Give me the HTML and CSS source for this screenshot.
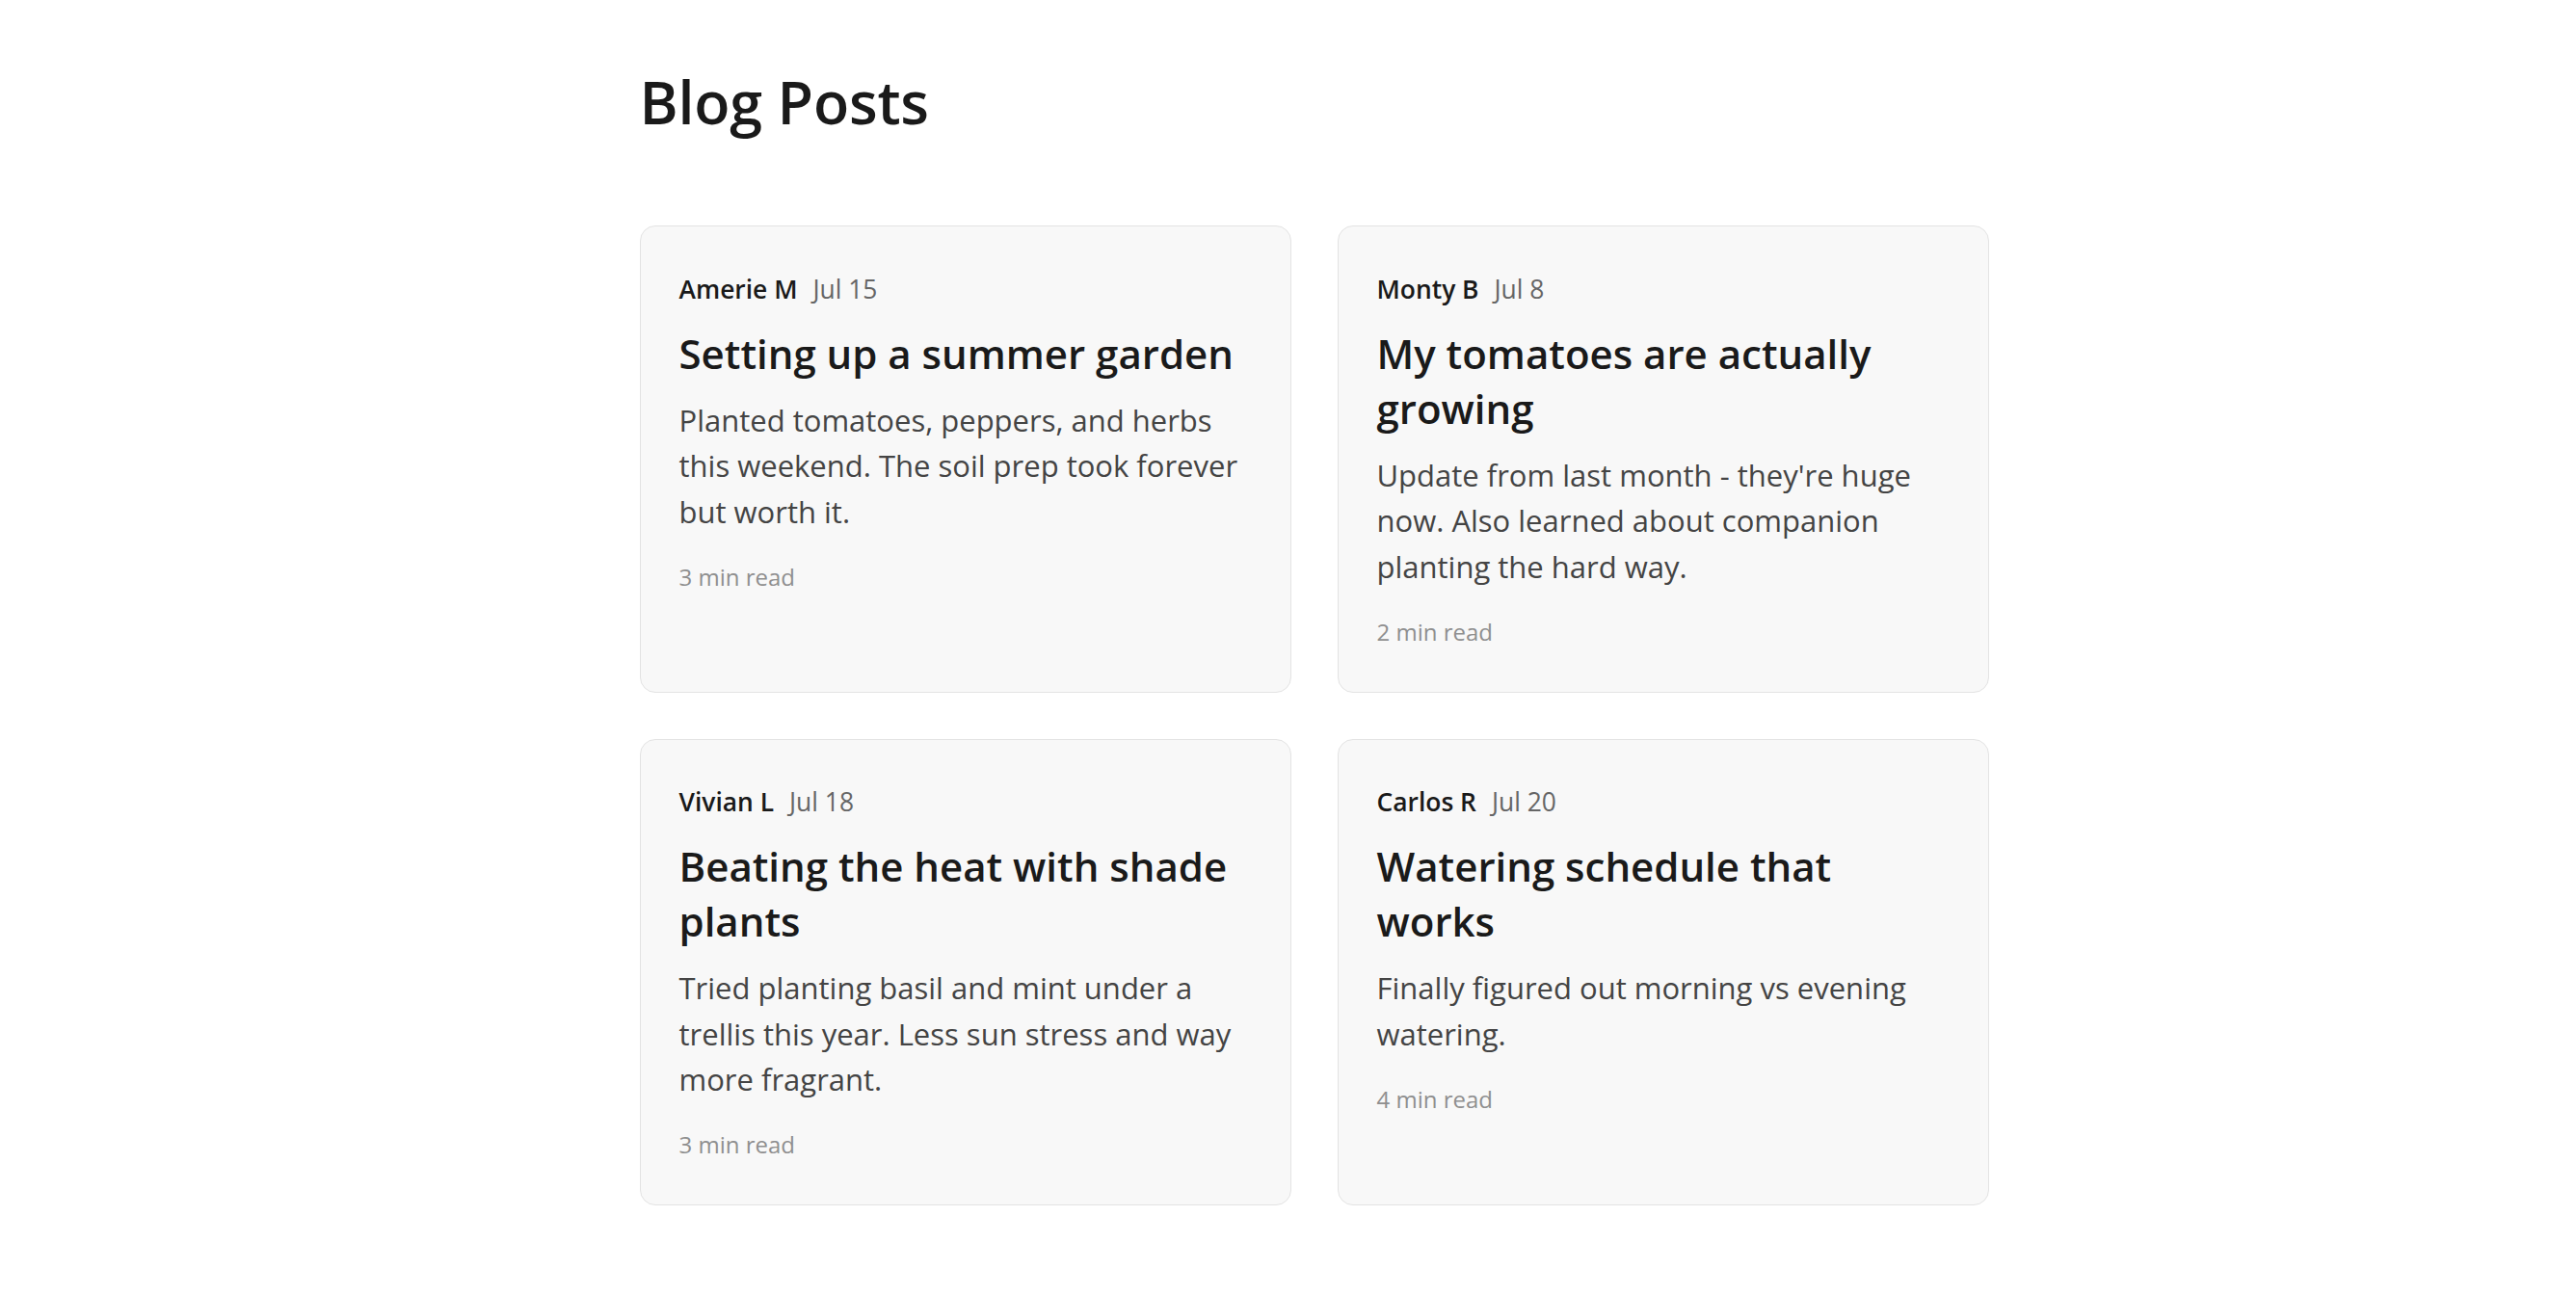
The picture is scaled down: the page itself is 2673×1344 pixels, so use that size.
FILE: index.html
```html
<!DOCTYPE html>
<html lang="en">
<head>
<meta charset="utf-8">
<title>Blog Posts</title>
<link rel="stylesheet" href="styles.css">
</head>
<body>
<main class="page">
  <h1 class="page-title">Blog Posts</h1>
  <section class="post-grid">
    <article class="post-card">
      <div class="post-meta"><span class="post-author">Amerie M</span><span class="post-date">Jul 15</span></div>
      <h2 class="post-title">Setting up a summer garden</h2>
      <p class="post-excerpt">Planted tomatoes, peppers, and herbs this weekend. The soil prep took forever but worth it.</p>
      <div class="post-read">3 min read</div>
    </article>
    <article class="post-card">
      <div class="post-meta"><span class="post-author">Monty B</span><span class="post-date">Jul 8</span></div>
      <h2 class="post-title">My tomatoes are actually growing</h2>
      <p class="post-excerpt">Update from last month - they're huge now. Also learned about companion planting the hard way.</p>
      <div class="post-read">2 min read</div>
    </article>
    <article class="post-card">
      <div class="post-meta"><span class="post-author">Vivian L</span><span class="post-date">Jul 18</span></div>
      <h2 class="post-title">Beating the heat with shade plants</h2>
      <p class="post-excerpt">Tried planting basil and mint under a trellis this year. Less sun stress and way more fragrant.</p>
      <div class="post-read">3 min read</div>
    </article>
    <article class="post-card">
      <div class="post-meta"><span class="post-author">Carlos R</span><span class="post-date">Jul 20</span></div>
      <h2 class="post-title">Watering schedule that works</h2>
      <p class="post-excerpt">Finally figured out morning vs evening watering.</p>
      <div class="post-read">4 min read</div>
    </article>
  </section>
</main>
</body>
</html>
```

FILE: styles.css
```css
* {
  box-sizing: border-box;
}

html, body {
  margin: 0;
  padding: 0;
  background: #ffffff;
}

body {
  font-family: "Open Sans", "Noto Sans", "Liberation Sans", sans-serif;
  color: #1a1a1a;
  padding-left: 54px;
}

.page {
  max-width: 1400px;
  margin: 0 auto;
  padding-top: 70px;
}

.page-title {
  margin: 0 0 93px 0;
  font-size: 61px;
  line-height: 71px;
  font-weight: 600;
  color: #1a1a1a;
  letter-spacing: -0.2px;
}

.post-grid {
  display: grid;
  grid-template-columns: 1fr 1fr;
  gap: 48px;
}

.post-card {
  background: #f8f8f8;
  border: 1px solid #e3e3e3;
  border-radius: 16px;
  padding: 40px 40px 43px 40px;
}

.post-meta {
  display: flex;
  align-items: baseline;
  gap: 16px;
  padding-top: 3.5px;
  font-size: 26.4px;
  line-height: 42px;
}

.post-author {
  font-weight: 600;
  color: #1a1a1a;
}

.post-date {
  color: #666666;
}

.post-title {
  margin: 17px 0 0 0;
  font-size: 42px;
  line-height: 57px;
  font-weight: 600;
  color: #1a1a1a;
}

.post-excerpt {
  margin: 18px 0 0 0;
  font-size: 31px;
  line-height: 47.5px;
  color: #444444;
}

.post-read {
  margin-top: 23.5px;
  font-size: 24px;
  line-height: 39px;
  color: #8f8f8f;
}
```
